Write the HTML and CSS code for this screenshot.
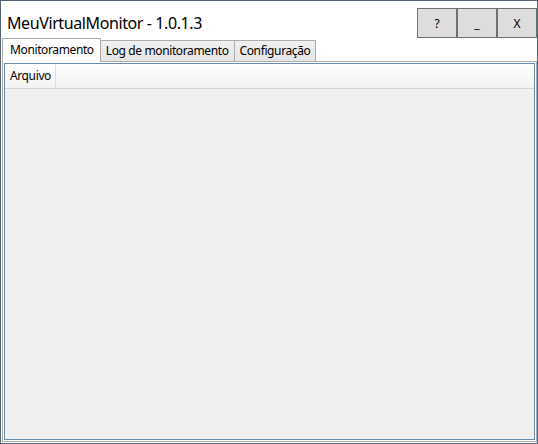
FILE: index.html
```html
<!DOCTYPE html>
<html>
<head>
  <title>MeuVirtualMonitor</title>
  <link rel="stylesheet" href="styles.css">
</head>
<body>
  <div class="window">
    <div class="titlebar">
      <div class="title">MeuVirtualMonitor - 1.0.1.3</div>
      <div class="window-buttons">
        <button class="win-btn">?</button>
        <button class="win-btn">_</button>
        <button class="win-btn">X</button>
      </div>
    </div>

    <div class="tab-control">
      <div class="tab-strip">
        <div class="tab selected">Monitoramento</div>
        <div class="tab">Log de monitoramento</div>
        <div class="tab">Configuração</div>
      </div>
      <div class="tab-panel">
        <div class="data-grid">
          <div class="grid-header">
            <div class="column-header">Arquivo</div>
            <div class="header-filler"></div>
          </div>
          <div class="grid-body"></div>
        </div>
      </div>
    </div>
  </div>
</body>
</html>
```

FILE: styles.css
```css
html, body {
  margin: 0;
  padding: 0;
}
body {
  font-family: 'Noto Sans', 'Open Sans', sans-serif;
  color: #000;
  background: #fff;
}
.window {
  width: 538px;
  height: 444px;
  box-sizing: border-box;
  border: 1px solid #556575;
  background: #fff;
  display: flex;
  flex-direction: column;
}
.titlebar {
  height: 37px;
  display: flex;
  justify-content: space-between;
  align-items: flex-start;
}
.title {
  font-size: 16px;
  letter-spacing: -0.4px;
  padding-left: 6px;
  margin-top: 10px;
  line-height: 24px;
}
.window-buttons {
  display: flex;
  margin-top: 7px;
}
.win-btn {
  width: 40px;
  height: 30px;
  box-sizing: border-box;
  border: 1px solid #707070;
  background: #dddddd;
  font-family: 'Noto Sans', sans-serif;
  font-size: 12px;
  color: #000;
  padding: 0;
  margin: 0;
}

/* abas */
.tab-control {
  flex: 1;
  display: flex;
  flex-direction: column;
  margin: 0 0 1px 1px;
}
.tab-strip {
  display: flex;
  align-items: flex-end;
  height: 23px;
  position: relative;
  z-index: 1;
}
.tab {
  font-size: 12px;
  letter-spacing: -0.38px;
  height: 21px;
  line-height: 19px;
  box-sizing: border-box;
  padding: 0 5px;
  border: 1px solid #acacac;
  border-bottom: none;
  background: linear-gradient(#f0f0f0, #e5e5e5);
  margin-left: -1px;
}
.tab.selected {
  height: 24px;
  margin-bottom: -1px;
  margin-left: 0;
  margin-right: -1px;
  padding: 1px 6px 0 7px;
  background: #fff;
  position: relative;
  z-index: 2;
}
.tab.selected + .tab {
  margin-left: 0;
}
.tab-panel {
  flex: 1;
  border: 1px solid #acacac;
  background: #fff;
  padding: 1px;
  display: flex;
}

/* grade */
.data-grid {
  flex: 1;
  border: 1px solid #688caf;
  background: #f0f0f0;
  display: flex;
  flex-direction: column;
}
.grid-header {
  display: flex;
  height: 24px;
  border-bottom: 1px solid #d5d5d5;
  background: linear-gradient(#ffffff, #f3f3f3);
}
.column-header {
  font-size: 12px;
  letter-spacing: -0.38px;
  line-height: 24px;
  padding: 0 4px 0 5px;
  border-right: 1px solid #e0e0e0;
}
.header-filler {
  flex: 1;
}
.grid-body {
  flex: 1;
}
```
